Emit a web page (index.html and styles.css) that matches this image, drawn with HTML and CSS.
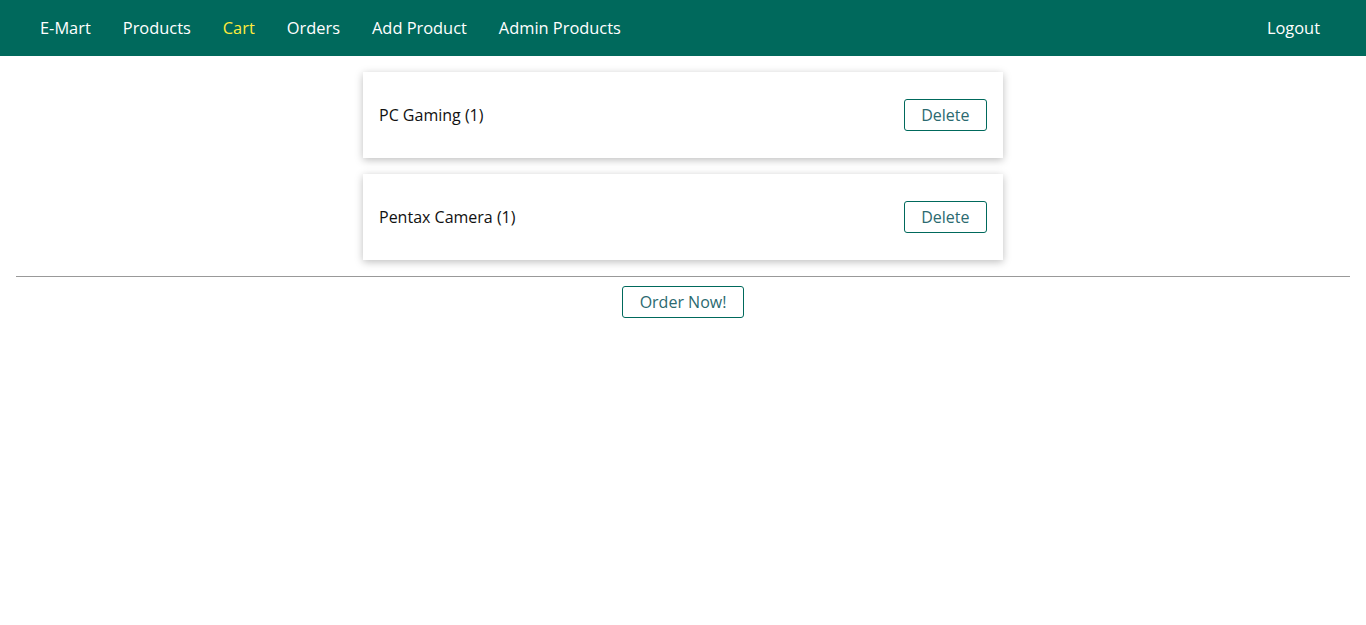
FILE: index.html
```html
<!DOCTYPE html>
<html>
<head>
<meta charset="utf-8">
<link rel="stylesheet" href="styles.css">
</head>
<body>
<header class="main-header">
  <nav class="main-header__nav">
    <ul class="main-header__item-list">
      <li class="main-header__item"><a href="#">E-Mart</a></li>
      <li class="main-header__item"><a href="#">Products</a></li>
      <li class="main-header__item"><a class="active" href="#">Cart</a></li>
      <li class="main-header__item"><a href="#">Orders</a></li>
      <li class="main-header__item"><a href="#">Add Product</a></li>
      <li class="main-header__item"><a href="#">Admin Products</a></li>
    </ul>
    <ul class="main-header__item-list">
      <li class="main-header__item"><a href="#">Logout</a></li>
    </ul>
  </nav>
</header>
<main class="main">
  <ul class="cart__item-list">
    <li class="cart__item">
      <h1 class="cart__title">PC Gaming (1)</h1>
      <button class="btn">Delete</button>
    </li>
    <li class="cart__item">
      <h1 class="cart__title">Pentax Camera (1)</h1>
      <button class="btn">Delete</button>
    </li>
  </ul>
  <hr class="divider">
  <div class="centered">
    <button class="btn">Order Now!</button>
  </div>
</main>
</body>
</html>
```
FILE: styles.css
```css
* { box-sizing: border-box; }
html, body {
  margin: 0;
  padding: 0;
  font-family: "Open Sans", sans-serif;
  background: #fff;
}
.main-header {
  width: 100%;
  height: 56px;
  background: #00695c;
  padding: 0 46px 1px 40px;
}
.main-header__nav {
  height: 100%;
  display: flex;
  align-items: center;
  justify-content: space-between;
}
.main-header__item-list {
  list-style: none;
  margin: 0;
  padding: 0;
  display: flex;
  gap: 32px;
}
.main-header__item a {
  text-decoration: none;
  color: #fff;
  font-size: 16.4px;
  font-weight: 500;
}
.main-header__item a.active { color: #ffeb3b; }
.main {
  padding: 16px;
}
.cart__item-list {
  list-style: none;
  margin: 0 auto;
  padding: 0;
  width: 640px;
  display: flex;
  flex-direction: column;
  gap: 16px;
}
.cart__item {
  height: 86px;
  display: flex;
  align-items: center;
  justify-content: space-between;
  padding: 16px;
  box-shadow: 0 2px 8px rgba(0, 0, 0, 0.26);
  background: #fff;
}
.cart__title {
  margin: 0;
  font-size: 16px;
  font-weight: 400;
  color: #111;
}
.btn {
  font: inherit;
  font-size: 16px;
  height: 32px;
  padding: 0 16.5px;
  border: 1px solid #00695c;
  background: #fff;
  border-radius: 3px;
  cursor: pointer;
  color: #2b6a70;
}
.divider {
  margin: 16px 0 9px;
  border: 0;
  border-top: 1px solid #999;
  height: 0;
}
.centered {
  display: flex;
  justify-content: center;
}
```
